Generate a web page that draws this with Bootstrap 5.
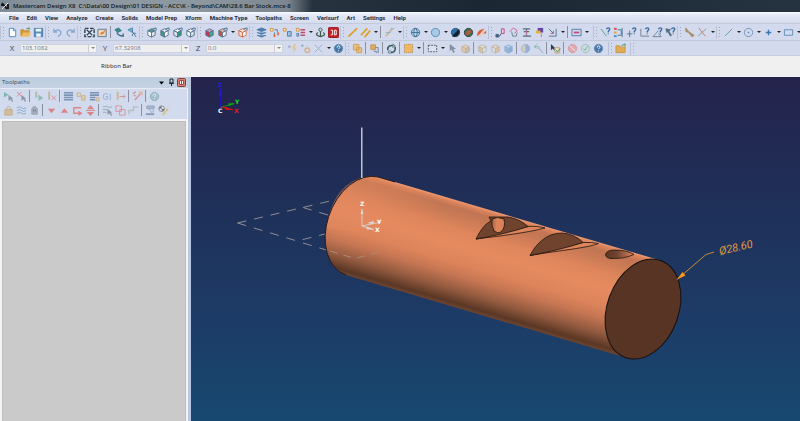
<!DOCTYPE html>
<html lang="en">
<head>
<meta charset="utf-8">
<meta name="viewport" content="width=device-width, initial-scale=1">
<title>Mastercam Design X8</title>
<link href="https://cdn.jsdelivr.net/npm/bootstrap@5.3.0/dist/css/bootstrap.min.css" rel="stylesheet">
<style>
body{font-family:"Open Sans","Noto Sans",sans-serif;font-size:6px;line-height:10px;background:#d3daed;color:#1e222c}
.titlebar{height:12px;background:linear-gradient(90deg,#7f8b96 0,#8d98a2 8%,#8c979f 25%,#7b8690 36%,#27333f 39%,#1b2733 60%,#253340 100%);color:#111820;padding:0 1px;line-height:11px;font-weight:600}
.titlebar svg{width:8px;height:8px}
.menubar{height:12px;background:linear-gradient(#fafbfe 0,#e4e9f6 3px,#d5dcee 100%);border-bottom:1px solid #c3cada;padding-left:9px;gap:8px;line-height:12px;font-family:Roboto,sans-serif;font-weight:700}
.menubar a{color:#2a2e38;text-decoration:none;white-space:nowrap}
.toolrow{height:16px;overflow:hidden}
.toolrow.coords{border-top:1px solid #c0c8db;border-bottom:1px solid #c5ccdb}
.tool{width:13px;height:13px;padding:0;border:0;background:none;flex:none;display:flex;align-items:center;justify-content:center;color:#54738f}
.tool svg{width:11px;height:11px;fill:none;stroke:currentColor;stroke-width:1}
.caret{width:7px;height:13px;padding:0;border:0;background:none;flex:none;display:flex;align-items:center;justify-content:center}
.caret::after{content:"";border:2px solid transparent;border-top-color:#222;margin-top:2px}
.grip{width:6px;height:13px;flex:none;border-left:1px solid #bac2d5;background:radial-gradient(circle,#9ea8bf 0 0.7px,transparent 1px) 1px 0/3px 3px repeat-y}
.rule{width:4px;height:12px;flex:none;background:linear-gradient(90deg,transparent 1px,#8a909d 1px 2px,transparent 2px)}
.spacer{width:3px;flex:none}
.faded{opacity:.5}
.axis{width:16px;flex:none;text-align:center;font-size:8px;color:#3d4354}
.coordbox{width:77px;height:9px;flex:none;background:#efeff0;border:1px solid #cfd3dd}
.coordbox input{min-width:0;width:100%;border:0;background:none;padding:0 1px;font-size:6px;line-height:7px;color:#6f7278}
.coordbox button{width:8px;flex:none;padding:0;border:0;border-left:1px solid #c9ccd4;background:#f3f3f4;display:flex;align-items:center;justify-content:center}
.coordbox button::after{content:"";border:2px solid transparent;border-top-color:#888;margin-top:2px}
.ribbon{height:21px;background:#f0f0f0;padding:4px 0 0 101px;font-size:6px;line-height:12px}
.side{width:191px;background:#f4f4f6;border-right:3px solid #b9c8df}
.side-head{height:11px;background:linear-gradient(#bccede,#c4d2e4);padding:0 2px;line-height:11px;color:#3a4652}
.side-head button{border:0;background:none;padding:0;width:10px;height:9px;display:flex;align-items:center;justify-content:center}
.side-head svg{width:9px;height:9px}
.side-tools{background:#d2daee;padding:0 2px 2px;border-right:1px solid #eef1f8;border-top:1px solid #e6ebf5}
.side-row{height:14px}
.oplist{background:#cacaca;margin:2px 2px 0;border:1px solid #bdbdbd;border-bottom:0}
.view{background:linear-gradient(#24234c 0,#1f3059 38%,#1d3b66 68%,#17486f 100%);overflow:hidden;min-width:0}
.view svg{display:block;width:100%;height:100%;min-height:344px}
</style>
<script src="https://cdn.jsdelivr.net/npm/bootstrap@5.3.0/dist/js/bootstrap.bundle.min.js"></script>
</head>
<body class="d-flex flex-column min-vh-100 overflow-hidden">
<header>
  <div class="titlebar d-flex align-items-center text-nowrap">
    <svg class="me-1" viewBox="0 0 8 8" fill="none" stroke="#111" stroke-width="1.8"><path d="M1 1l5 6"/><path d="M7 1L1 7" stroke="#eee" stroke-width="1"/><path d="M7 2v5M1 2v2"/></svg>
    <span>Mastercam Design X8&nbsp; C:\Data\00 Design\01 DESIGN - ACC\K - Beyond\CAM\28.6 Bar Stock.mcx-8</span>
  </div>
  <nav class="menubar d-flex" aria-label="Main menu">
    <a href="#">File</a><a href="#">Edit</a><a href="#">View</a><a href="#">Analyze</a><a href="#">Create</a><a href="#">Solids</a><a href="#">Model Prep</a><a href="#">Xform</a><a href="#">Machine Type</a><a href="#">Toolpaths</a><a href="#">Screen</a><a href="#">Verisurf</a><a href="#">Art</a><a href="#">Settings</a><a href="#">Help</a>
  </nav>
  <div class="toolrow d-flex align-items-center" data-tools="; new open save ; undo~ redo~ ; fit repaint | orbit spin ; cubeTop cubeFront cubeRight cubeIso ; cubePink cubeRed+ cubeOrange ; layers tree tree2 tree3+ anchor redbox ; pencil pencils+ | trim~+ ; globe+ sphere+ ballHalf ballRed ballSlash ; joint house beam paint corner+ | fitbox+ _ ; askLine askChain askPoint askCorner askAngle askCursor ; hammer cross+ ; line+ circle+ plus+ rect+"></div>
  <div class="toolrow coords d-flex align-items-center">
    <label class="axis ms-1" for="cx">X</label>
    <div class="coordbox d-flex"><input id="cx" value="103.1082"><button aria-label="X history"></button></div>
    <label class="axis" for="cy">Y</label>
    <div class="coordbox d-flex"><input id="cy" value="67.32908"><button aria-label="Y history"></button></div>
    <label class="axis" for="cz">Z</label>
    <div class="coordbox d-flex"><input id="cz" value="0.0"><button aria-label="Z history"></button></div>
    <div class="d-flex align-items-center" data-tools="_ bolt~ gear~ crossGrey~+ help ; copyGold | copySmall | recycle | selGold+ | selRect+ cursor~ boxCheck~ | cubeGold~ cubeGold2~ cubeBlue~ | halfBall~ arrowBack~ | cursorBox | stop~ okay~ help _ ; folder _ ;"></div>
  </div>
  <div class="ribbon">Ribbon Bar</div>
</header>
<main class="d-flex flex-grow-1">
  <aside class="side d-flex flex-column flex-shrink-0">
    <div class="side-head d-flex align-items-center">
      <span class="me-auto">Toolpaths</span>
      <button aria-label="Menu"><svg viewBox="0 0 9 9"><path d="M2 3.500h5L4.500 6.500z" fill="#000"/></svg></button>
      <button aria-label="Pin"><svg viewBox="0 0 9 9"><path d="M3 1h3v4H3zM2 5.300h5M4.500 5v3" fill="none" stroke="#222"/></svg></button>
      <button aria-label="Close"><svg viewBox="0 0 9 9"><rect x=".5" y=".5" width="8" height="8" rx="1" fill="#dc8376" stroke="#843c39"/><path d="M2.500 2.500h4v4h-4zM4.500 2.500v4" fill="#fff" stroke="#a34945"/></svg></button>
    </div>
    <div class="side-tools">
      <div class="side-row d-flex align-items-center" data-tools="selOps~ unselOps~ | regen~ regenX~ | bars~ twoPages~ barsPage~ gOne~ toolArrow~ | wand~ | helpTeal~"></div>
      <div class="side-row d-flex align-items-center" data-tools="lock~ waves~ ghost~ | down~ up~ insert~ updown~ | wavesCur~ squares~ steps~ | post~ ballPencil~"></div>
    </div>
    <div class="oplist flex-grow-1"></div>
  </aside>
  <section class="view flex-grow-1" aria-label="Graphics view">
    <svg viewBox="191 77 609 344" preserveAspectRatio="xMinYMin meet" font-family="DejaVu Sans, sans-serif">
      <defs>
        <linearGradient id="barShade" gradientUnits="userSpaceOnUse" x1="378" y1="177" x2="348.800" y2="276">
          <stop offset="0" stop-color="#f19b72"/><stop offset=".025" stop-color="#dc845b"/><stop offset=".07" stop-color="#c17553"/><stop offset=".14" stop-color="#c97a55"/><stop offset=".28" stop-color="#e0865c"/><stop offset=".42" stop-color="#e68b60"/><stop offset=".58" stop-color="#dd845b"/><stop offset=".7" stop-color="#c67653"/><stop offset=".84" stop-color="#935a3f"/><stop offset=".96" stop-color="#5a3725"/><stop offset="1" stop-color="#6f4530"/>
        </linearGradient>
        <linearGradient id="endGlow" gradientUnits="userSpaceOnUse" x1="325" y1="200" x2="440" y2="234">
          <stop offset="0" stop-color="#e4895f"/><stop offset=".4" stop-color="#e4895f" stop-opacity=".8"/><stop offset="1" stop-color="#e4895f" stop-opacity="0"/>
        </linearGradient>
        <linearGradient id="holeShade"><stop offset="0" stop-color="#a5623f"/><stop offset=".4" stop-color="#df845a"/><stop offset="1" stop-color="#d98058"/></linearGradient>
        <linearGradient id="slotShade"><stop offset="0" stop-color="#5e3825"/><stop offset=".4" stop-color="#704430"/><stop offset="1" stop-color="#df875e"/></linearGradient>
      </defs>
      <g fill="none" stroke="#8f8d91" stroke-dasharray="9 8">
        <path d="M237.500 223L330 201M237.500 223L297 241L329 233M303 207.500L328 215M303 243L328 250.500"/>
      </g>
      <path d="M378 177L659 260L627 358L346 275A35.700 51.600 20 0 1 378 177Z" fill="url(#barShade)"/>
      <path d="M374 177Q410 188 440 204L420 236L340 230L326 228Q332 188 360 178Z" fill="url(#endGlow)" opacity=".45"/>
      <path d="M346 275A35.700 51.600 20 0 1 378 177L395 182" fill="none" stroke="#281a1b" stroke-width="1"/>
      <path d="M361.800 127.500V178" stroke="#dadbe6" stroke-width="1.300"/>
      <path d="M330 251L355 258.500L379 252" fill="none" stroke="#ad8a7a" stroke-dasharray="8 6"/>
      <g stroke="#21150f" stroke-width=".8" stroke-linejoin="round">
        <path d="M476 239L528 226.500C534 226 540 226.500 545 228C526 233 500 236 476 239Z" fill="#dc845b"/>
        <path d="M476 239C481 229 485 224 491 221L489 217L508 217Q520 219 528 226.500Q506 234 476 239Z" fill="#6f432d"/>
        <path d="M492 219Q497 216 504 219Q506 227 501 232Q498 234 494 231Q491 226 492 219Z" fill="url(#holeShade)"/>
        <path d="M530 255.500L583 242.500Q592 242 598.500 243.500C588 248 555 251 530 255.500Z" fill="#dc845b"/>
        <path d="M530 255.500C537 242 548 233 562 233Q575 234 583 242.500Q560 250 530 255.500Z" fill="#6f432d"/>
        <path d="M605.500 255Q606 250 615 250Q627 250 634 254.500Q624 259 611 258.500Q606 258 605.500 255Z" fill="url(#slotShade)"/>
        <ellipse cx="643" cy="309" rx="35.700" ry="51.600" transform="rotate(20 643 309)" fill="#573424" stroke="#17100d" stroke-width="1"/>
      </g>
      <g stroke="#dadcde" fill="#dadcde">
        <path d="M362 226V209M362 226L381 222M362 226L374 230" fill="none" stroke-width=".8"/>
        <path d="M360.500 214l1.500-5 1.500 5zM367 223l7-2-1 3zM366 226.500l8 2.500-7 .5z" stroke="none"/>
      </g>
      <g font-size="6" font-weight="700" fill="#fff"><text x="360" y="206">Z</text><text x="377" y="224">Y</text><text x="375" y="232">X</text></g>
      <g fill="none"><path d="M220.500 107V89" stroke="#1919b8"/><path d="M221 107l13-3" stroke="#0b8a16"/><path d="M221 107l12 3" stroke="#d01515"/></g>
      <path d="M219 96l1.500-8 1.500 8z" fill="#1c1cd2"/><path d="M228 103.500l7-.5-6 3z" fill="#0aa818"/><path d="M224 106.500l9 3-7 .5z" fill="#e01414"/>
      <g font-size="6" font-weight="700"><text x="218" y="87" fill="#2020e0">Z</text><text x="235" y="104" fill="#12e020">Y</text><text x="234" y="113" fill="#f01818">X</text><text x="218" y="113" fill="#fff">C</text></g>
      <path d="M677 279.500L706 254.500L714 252" fill="none" stroke="#c98a39"/>
      <path d="M677 279.500l5.500-7.500 3 3.500z" fill="#ff9a12"/>
      <text x="720" y="255" transform="rotate(-13 720 255)" font-family="Roboto, sans-serif" font-style="italic" font-size="11" fill="#e09a42">Ø28.60</text>
    </svg>
  </section>
</main>
<script>
const cube=(t,l,r,e='')=>`<path d="M2 4l4-2 4 2-4 2z" fill="${t}"/><path d="M2 4l4 2v5L2 9z" fill="${l}"/><path d="M10 4L6 6v5l4-2z" fill="${r}"/>${e}`;
const tick='<path d="M7 2l4-1v3" stroke="#3f7394"/>';
const q='<path d="M7 2.500Q7.500 1 9 1q2 0 1.500 2L9 5v1M9 7v1" stroke="#36699e" stroke-width="1.400"/>';
const cur='<path d="M6 4v7l2-2 2 3 1-1-1.500-2.500H11z" fill="#43556b" stroke="none"/>';
const ball=(f,s,x='')=>`<circle cx="6" cy="6" r="4.500" fill="${f}" stroke="${s}"/>${x}`;
const icons={
new:'<path d="M2.500 1.500h5l2 2v7h-7z" fill="#fff" stroke="#4a8bc2"/><path d="M7 1.500V4h2.500" stroke="#4a8bc2"/>',
open:'<path d="M1 10V3h3l1 1h5v2" fill="#d4973a" stroke="#c98f39"/><path d="M1 10.500L3.500 6H12l-2 4.500z" fill="#edba61" stroke="none"/><path d="M7 2l3-1v2" stroke="#36893e"/>',
save:'<path d="M1.500 1.500h9v9h-9z" fill="#5d91bd" stroke="#427cae"/><path d="M3 2h6v3H3zM3.500 7h5v3.500h-5z" fill="#eef4fa" stroke="none"/>',
undo:'<path d="M2 2v3.500h3.500M2.500 5Q7 1.500 9.500 5q1 3-3 5.500" stroke="#3878b8" stroke-width="1.500"/>',
redo:'<path d="M10 2v3.500H6.500M9.500 5Q5 1.500 2.500 5q-1 3 3 5.500" stroke="#3878b8" stroke-width="1.500"/>',
fit:'<path d="M1 1.500h10v9H1z" fill="#dfe7f1" stroke="#31445a" stroke-width="1.600" stroke-dasharray="4 1.500"/><path d="M3 3l6 6M9 3l-6 6" stroke="#31445a" stroke-width="1.400"/>',
repaint:'<path d="M1 2.500h9v8H1z" fill="#f0d9b8" stroke="#52779a"/><path d="M3 8q1-3 4-3l4-4-3 5q-1 3-5 2z" fill="#dd8145" stroke="none"/>',
orbit:'<path d="M1 3l4-2 3 3-4 2z" fill="#3f8c88" stroke="#39768a"/><path d="M3 6q2 4 7 4M10 7v3L6 9" stroke="#366982" stroke-width="1.400"/>',
spin:'<path d="M1 3l5-2v5z" fill="#78aeca" stroke="#4d86ad"/><path d="M6 5l4 6M10 7q-5-1-4 3" stroke="#4d769b"/>',
cubeTop:cube('#4c9e84','#fff','#dfe5ea',tick),cubeFront:cube('#dfe7ec','#449a7c','#fff',tick),cubeRight:cube('#fff','#dfe7ec','#35977a',tick),cubeIso:cube('#fff','#f4f6f8','#d8dfe7',tick),
cubePink:cube('#e898b4','#c8325a','#46a784'),cubeRed:cube('#efb7a0','#cc553b','#f5f5f5',tick),cubeOrange:'<g stroke="#d46d46">'+cube('#eee','#f1ddd6','#fff',tick)+'</g>',
layers:'<path d="M1 3l5-2 5 2-5 2zM1 6l5 2 5-2M1 9l5 2 5-2" fill="#487cae" stroke="#487cae"/>',
tree:'<path d="M1.500 1.500h3v3h-3z" fill="#fbe7c4" stroke="#d29135"/><path d="M6 3h3v3M6 6v2" stroke="#447bb1"/><path d="M5 8h2v3H5zM9 6h2v3H9z" fill="#d66b46" stroke="none"/>',
tree2:'<path d="M1.500 1.500h3v3h-3z" fill="#fbe7c4" stroke="#d29135"/><path d="M6 5h4v5H6z" fill="#9fc2de" stroke="#487aaf"/>',
tree3:'<path d="M1.500 1.500h3v3h-3z" fill="#fbe7c4" stroke="#d29135"/><path d="M6 3h5M6 6h5M6 9h5" stroke="#c04c70" stroke-width="1.500"/><path d="M2 7h2v3H2z" stroke="#447bb1"/>',
anchor:'<circle cx="6" cy="3" r="1.800" stroke="#385b4e"/><path d="M6 5v6M3 6q-4 3 3 4.500Q13 9 9 6" stroke="#385b4e" stroke-width="1.300"/>',
redbox:'<rect x=".5" y=".5" width="11" height="11" rx="1" fill="#c91d22" stroke="#8d171d"/><path d="M3 3.500h2v5H3M7 3.500h2v5H7z" stroke="#fff"/>',
pencil:'<path d="M1.500 10.500L11 1.500" stroke="#dba128" stroke-width="2"/>',
pencils:'<path d="M1 9L8 1.500M5 11l6-7" stroke="#dba128" stroke-width="1.900"/>',
trim:'<path d="M2 10l7-8" stroke="#c49a35" stroke-width="1.900"/><path d="M7 2h4M2 6h5" stroke="#4d84ac"/>',
globe:ball('#bcd6e8','#3d6f9a','<path d="M6 1q-4 5 0 10M6 1q4 5 0 10M1.500 6h9" stroke="#3d6f9a"/>'),
sphere:ball('#a7cbe4','#5787ad'),
ballHalf:ball('#2873aa','#254e74','<path d="M2 10L10 2Q12 9 5 11z" fill="#16212d" stroke="none"/>'),
ballRed:ball('#3c7350','#2e3a35','<path d="M3 9q0-5 6-6 0 5-6 6z" fill="#c35440" stroke="none"/>'),
ballSlash:'<path d="M1 10Q1 3 9 2L4 8z" fill="#da5c3d" stroke="none"/><path d="M3 11l7-8" stroke="#f2c8af" stroke-width="2"/><path d="M8 7l3-3v3z" fill="#cf5538" stroke="none"/>',
joint:'<path d="M1 10h4l2-3" stroke="#395270"/><path d="M7 2h3v5H7z" stroke="#c73e84"/><path d="M1 8h3v3H1z" fill="#395270"/>',
house:'<path d="M2 5l4-4 4 3-3 3" stroke="#c65b96"/><path d="M4 5l1 5h4l1-4" stroke="#667e93"/>',
beam:'<path d="M2 2h8M2 10h9M6 2v8M3 5h6" stroke="#5b6d82" stroke-width="1.400"/><path d="M6 4v5" stroke="#b978a0"/>',
paint:'<path d="M4 1h6v5H4z" fill="#6446a7" stroke="none"/><path d="M2 4h5v3H2z" fill="#e9b531" stroke="none"/><path d="M8 7v4" stroke="#de6b45"/>',
corner:'<path d="M2 10h8V2M2 2l5 5" stroke="#53728d"/><path d="M7 4v3H4" stroke="#b85491"/>',
fitbox:'<path d="M1 2.500h10v7H1z" stroke="#4879a9"/><path d="M3 6h6" stroke="#c74a75" stroke-width="2"/>',
askLine:'<path d="M1 2l6 8" stroke="#4aa37e"/>'+q,askChain:'<path d="M1 1h3v2H1z" fill="#d5493f" stroke="none"/><path d="M1 5h3v2H1z" fill="#e2a33f" stroke="none"/><path d="M1 9h3v2H1z" fill="#4a8bc2" stroke="none"/><path d="M5 3h4v6H5M10 1v10" stroke="#4d7496"/>',
askPoint:'<path d="M4 4v7M1 7.500h6"/>'+q,askCorner:'<path d="M2 2v8h9" stroke="#6d7f90"/>'+q,askAngle:'<path d="M7 4l-6 6.500h9L7 7" stroke="#6d7f90"/>'+q,askCursor:'<path d="M1 2l5 1-2 1 3 5-1 1-3-5-1 1z" fill="#4d6577"/>'+q,
hammer:'<path d="M2 1l3 4 6 4-2 2-4-5-3-1z" fill="#a69165" stroke="#a69165"/>',
cross:'<path d="M2 1l7 9" stroke="#d0705e"/><path d="M10 2l-9 8" stroke="#8a9d8c"/>',
line:'<path d="M2 10l8-8" stroke="#6993b7"/>',circle:'<circle cx="6" cy="6" r="4.500" stroke="#6d93b4"/><circle cx="6" cy="6" r="1" fill="#6d93b4" stroke="none"/>',
plus:'<path d="M6 3v6M3 6h6" stroke="#3d77b0" stroke-width="1.500"/>',rect:'<path d="M1.500 3h9v6h-9z" stroke="#5c8db8"/>',
bolt:'<path d="M1 4h3M2.500 2.500v3"/><path d="M8 1L5 6h3l-2 5 5-6H8l2-4z" fill="#f0ad36" stroke="none"/>',
gear:'<path d="M1 3h3M2.500 1.500v3"/><circle cx="8" cy="8" r="2.500" stroke="#d98a31" stroke-width="1.600"/>',
crossGrey:'<path d="M2 2l8 8M10 2l-8 8" stroke="#78869b"/>',
help:ball('#4478a8','#5f88ad','<path d="M4.500 5Q4.500 3 6 3t1.500 2L6 6.500M6 8v1" stroke="#fff"/>'),
helpTeal:ball('#72a7a8','#4a8992','<path d="M4.500 5Q4.500 3 6 3t1.500 2L6 6.500M6 8v1" stroke="#fff"/>'),
copyGold:'<path d="M1.500 1.500h6v6h-6zM5 5h5.500v5.500H5z" fill="#ebbe79" stroke="#c9a05f"/>',
copySmall:'<path d="M2 2h5v5H2z" fill="#e4ad5a" stroke="#bf944f"/><path d="M7 5h3v6M5 9h3v2" stroke="#6b7f97"/>',
recycle:'<path d="M2 8V5q2-3 6-2M10 4v3q-1 4-5 3" stroke="#3f5c55" stroke-width="1.800"/><path d="M7 1l3 2-3 2M5 8L2 10l3 2"/>',
selGold:'<path d="M1.500 1.500h9v9h-9z" fill="#efb860" stroke="#a5834c" stroke-dasharray="1 1"/>',
selRect:'<path d="M1.500 2.500h9v7h-9z" fill="#dce3ef" stroke="#4e5967" stroke-dasharray="2 1"/>',
cursor:'<path d="M3 1v8l2-2 2 4 1.500-1L7 6.500h3z" fill="#394658" stroke="none"/>',
boxCheck:'<g stroke="#b7905d">'+cube('#eec98f','#e6b673','#d89e58')+'</g><path d="M6 9l2 2 3-5" stroke="#52a078"/>',
cubeGold:'<g stroke="#a9935f">'+cube('#f0e2c8','#e7a94c','#dfe5ea')+'</g>',cubeGold2:'<g stroke="#a9935f">'+cube('#f3d9a8','#dfe5ea','#e7a94c')+'</g>',cubeBlue:'<g stroke="#5689bb">'+cube('#9dc1e0','#5e94c5','#4a82b8')+'</g>',
halfBall:ball('#d9bd8b','#778ca3','<path d="M6 1.500Q11 2 10.500 6T6 10.500z" fill="#5287ba" stroke="none"/>'),
arrowBack:'<path d="M5 1L1 4l4 2M2 4q6-1 5 2" stroke="#4e9a81"/><path d="M6 5l5 6"/>',
cursorBox:'<path d="M1 1v7l2-2 2 3V5z" fill="#2f3c4c" stroke="none"/><path d="M5.500 5h5v6h-5z" fill="#e9dab9" stroke="#c1a87d"/><path d="M7 8l1 2 3-4" stroke="#3b8f65"/>',
stop:ball('#eb796e','#d75a54','<path d="M3 3l6 6" stroke="#fff"/>'),okay:ball('#c4dfcf','#6d9e8c','<path d="M3.500 6l2 2 3-5" stroke="#368c63"/>'),
folder:'<path d="M1 10.500V3h4l1 1.500h5v6z" fill="#e2ac55" stroke="#ca9544"/><path d="M7 3l4-2v3" stroke="#438d59"/>',
selOps:'<path d="M1 1l5 3-5 3z" fill="#2d9a72" stroke="none"/>'+cur,unselOps:'<path d="M1 1l5 5M6 1L1 6" stroke="#e23d34"/>'+cur,
regen:'<path d="M3 1h1v6H3z" fill="#b5a77a" stroke="#9c8e65"/><path d="M6 4l5 3.500L6 11z" fill="#3aa180" stroke="none"/>',regenX:'<path d="M3 1h1v8H3z" fill="#c0a150" stroke="#ad9149"/><path d="M6 5l5 5M11 5l-5 5" stroke="#e24940"/>',
bars:'<path d="M1 2h10M1 4.500h10M1 7h10M1 9.500h10" stroke="#274f7d" stroke-width="1.700"/>',
twoPages:'<path d="M1 2h4v4H1z" fill="#e5c48e" stroke="#b79a65"/><path d="M6 5h4v5H6z" fill="#efbd63" stroke="#c48d37"/>',
barsPage:'<path d="M1 2h10M1 4.500h10M1 7h6M1 9.500h6" stroke="#274f7d" stroke-width="1.700"/><path d="M8 7h3v4H8z" fill="#eebc6b" stroke="#b9925c"/>',
gOne:'<path d="M6 3.500Q1.500 1.500 1.500 6T6 8.500V6H4M9 3v7" stroke="#4481bc"/>',
toolArrow:'<path d="M2.500 1h1v8h-1z" fill="#e0a646" stroke="#c88e38"/><path d="M5 6h6M9 4l2 2-2 2" stroke="#d14e44"/>',
wand:'<path d="M1 3l3-2M2 5h2M10 2L3 10" stroke="#d64a3b" stroke-width="1.500"/><path d="M7 1h4v4" stroke="#df923d"/>',
lock:'<path d="M2 5h8v6H2z" fill="#d3a049" stroke="#b68231"/><path d="M4 5V3q2-3 4 0v2" stroke="#a98241"/>',
waves:'<path d="M1 3q3-2 5 0t5 0M1 6q3-2 5 0t5 0M1 9q3-2 5 0t5 0" stroke="#3877a4"/>',
ghost:'<path d="M3 4q3-5 6 0v6H3z" fill="#77818d" stroke="#647080"/><path d="M5 5v2M7 5v2" stroke="#111"/>',
down:'<path d="M2 4h8L6 9z" fill="#df3328" stroke="none"/>',up:'<path d="M2 8.500h8L6 3.500z" fill="#df3328" stroke="none"/>',
insert:'<path d="M10 3H2v6h7M7 7l3 2-3 2" stroke="#df3328" stroke-width="1.500"/>',updown:'<path d="M2 4.500L6 0l4 4.500zM2 7.500L6 12l4-4.500z" fill="#df3328" stroke="none"/><path d="M1 6h10" stroke="#df3328"/>',
wavesCur:'<path d="M1 2q3-1 5 0t5 0M1 5h5M1 8h4" stroke="#547e88"/>'+cur,squares:'<path d="M1 1h6v6H1zM5 5h6v6H5z" stroke="#e44a46"/>',
steps:'<path d="M1 10V6h5V2h5" stroke="#9da096" stroke-width="1.500"/>',
post:'<path d="M2 1h8v3H2zM4 4l4 5" fill="#8495a8"/><path d="M1 10h9" stroke="#395d86" stroke-width="2"/><path d="M9 5v3"/>',
ballPencil:'<circle cx="4" cy="4" r="3" fill="#fff" stroke="#333"/><path d="M4 1v3H1q0-3 3-3M4 4h3q0 3-3 3z" fill="#222" stroke="none"/><path d="M5 11l6-7" stroke="#d5b130" stroke-width="1.900"/>'
};
document.querySelectorAll('[data-tools]').forEach(row=>{
  row.innerHTML=row.dataset.tools.split(' ').map(t=>{
    if(t===';')return '<span class="grip"></span>';
    if(t==='|')return '<span class="rule"></span>';
    if(t==='_')return '<span class="spacer"></span>';
    const name=t.replace(/[~+]/g,'');
    return `<button class="tool${t.includes('~')?' faded':''}" aria-label="${name}"><svg viewBox="0 0 12 12">${icons[name]}</svg></button>`+(t.includes('+')?`<button class="caret" aria-label="${name} options"></button>`:'');
  }).join('');
});
</script>
</body>
</html>
